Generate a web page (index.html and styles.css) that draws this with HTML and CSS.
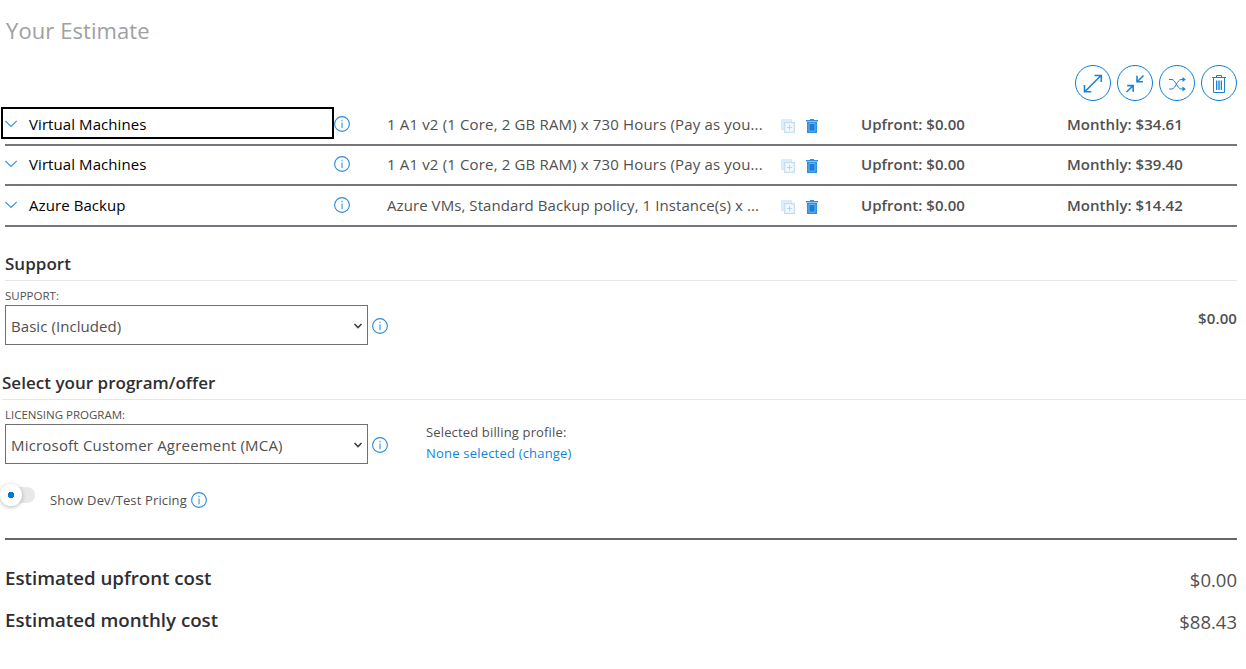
FILE: index.html
```html
<!DOCTYPE html>
<html lang="en">
<head>
<meta charset="utf-8">
<title>Your Estimate</title>
<link rel="stylesheet" href="styles.css">
</head>
<body>
<svg class="sprite" aria-hidden="true">
  <symbol id="info" viewBox="0 0 16 16"><circle cx="8" cy="8" r="7.4" fill="none" stroke="#2b8bd8" stroke-width="1.1"/><path d="M7.300 3.800h1.500v1.500H7.300zM7.300 6.500h1.500v5.700H7.300z" fill="#6cafe4"/></symbol>
  <symbol id="chevron" viewBox="0 0 12 8"><path d="M.3 1 6 6.500 11.700 1" fill="none" stroke="#3697e2" stroke-width="1.2"/></symbol>
  <symbol id="copy" viewBox="0 0 14 14"><path d="M.7.7h9.800v2.600H3.300v7.200H.7z" fill="#deedfa" stroke="#d3e7f8"/><path d="M3.700 3.700h9.600v9.600H3.700z" fill="#f4f9fe" stroke="#c4dff5" stroke-width="1.300"/><path d="M8.500 5.800v5.400M5.800 8.500h5.400" fill="none" stroke="#b5d7f3" stroke-width="1.2"/></symbol>
  <symbol id="bin" viewBox="0 0 12 14"><path d="M0 .9h4V0h4v.9h4v1.700H0zM1 3h10v11H1z" fill="#2f8fde"/><path d="M3 4.500h6v7.700H3z" fill="#1680d8" stroke="#8fc4ef" stroke-width=".7"/></symbol>
  <symbol id="caret" viewBox="0 0 10 6"><path d="M1.500 1 5 4.500 8.500 1" fill="none" stroke="#3f3f3f" stroke-width="1.6"/></symbol>
</svg>
<main class="estimate">
  <h1 class="title">Your Estimate</h1>
  <div class="toolbar">
    <button class="round" aria-label="Expand all"><svg viewBox="0 0 36 36"><path d="M10 26.500 26 10.500M19.500 10.500h6.800v6.500M9.500 20v6.800h6.800"/></svg></button>
    <button class="round" aria-label="Collapse all"><svg viewBox="0 0 36 36"><path d="m26.500 10.500-6.300 6.200M20 10.700v6.100h6M9.500 27l6.500-6.300M10.200 20.600h6v6.100"/></svg></button>
    <button class="round" aria-label="Reorder"><svg viewBox="0 0 36 36"><path class="thin" d="M10 14.500h3c3.200 0 5.500 9.500 9 9.500h2M10 24h3c3.200 0 5.500-9.500 9-9.500h2"/><path class="solid" d="m23.500 12 3.300 2.500-3.300 2.500zM23.500 21.500l3.300 2.500-3.300 2.500z"/></svg></button>
    <button class="round" aria-label="Delete all"><svg viewBox="0 0 36 36"><path class="thin" d="M11 12.500h14M15.500 12v-1.500h5V12M12.500 13v14.500h11V13M15.500 15.500V25M17.200 15.500V25M18.800 15.500V25M20.500 15.500V25"/></svg></button>
  </div>

  <section class="items">
    <div class="item first">
      <button class="name focused"><svg class="chev"><use href="#chevron"/></svg>Virtual Machines</button>
      <svg class="info"><use href="#info"/></svg>
      <span class="desc">1 A1 v2 (1 Core, 2 GB RAM) x 730 Hours (Pay as you...</span>
      <svg class="copy"><use href="#copy"/></svg>
      <svg class="bin"><use href="#bin"/></svg>
      <b class="cost">Upfront: $0.00</b>
      <b class="cost">Monthly: $34.61</b>
    </div>
    <div class="item second">
      <button class="name"><svg class="chev"><use href="#chevron"/></svg>Virtual Machines</button>
      <svg class="info"><use href="#info"/></svg>
      <span class="desc">1 A1 v2 (1 Core, 2 GB RAM) x 730 Hours (Pay as you...</span>
      <svg class="copy"><use href="#copy"/></svg>
      <svg class="bin"><use href="#bin"/></svg>
      <b class="cost">Upfront: $0.00</b>
      <b class="cost">Monthly: $39.40</b>
    </div>
    <div class="item third">
      <button class="name"><svg class="chev"><use href="#chevron"/></svg>Azure Backup</button>
      <svg class="info"><use href="#info"/></svg>
      <span class="desc backup">Azure VMs, Standard Backup policy, 1 Instance(s) x ...</span>
      <svg class="copy"><use href="#copy"/></svg>
      <svg class="bin"><use href="#bin"/></svg>
      <b class="cost">Upfront: $0.00</b>
      <b class="cost">Monthly: $14.42</b>
    </div>
  </section>

  <section class="support">
    <h2 class="heading">Support</h2>
    <div class="field-row">
      <div class="field">
        <span class="label">SUPPORT:</span>
        <div class="select-line"><div class="select"><span>Basic (Included)</span><svg class="caret"><use href="#caret"/></svg></div><svg class="info"><use href="#info"/></svg></div>
      </div>
      <b class="support-cost">$0.00</b>
    </div>
  </section>

  <section class="program">
    <h2 class="heading">Select your program/offer</h2>
    <div class="field-row">
      <div class="field">
        <span class="label">LICENSING PROGRAM:</span>
        <div class="select-line"><div class="select"><span class="wide">Microsoft Customer Agreement (MCA)</span><svg class="caret"><use href="#caret"/></svg></div><svg class="info"><use href="#info"/></svg></div>
      </div>
      <div class="billing"><span>Selected billing profile:</span><a>None selected (change)</a></div>
    </div>
  </section>

  <div class="dev">
    <span class="switch"><span class="knob"></span></span>
    <span class="dev-label">Show Dev/Test Pricing</span>
    <svg class="info"><use href="#info"/></svg>
  </div>

  <section class="totals">
    <div class="total"><b>Estimated upfront cost</b><span>$0.00</span></div>
    <div class="total"><b>Estimated monthly cost</b><span>$88.43</span></div>
  </section>
</main>
</body>
</html>
```

FILE: styles.css
```css
* { box-sizing: border-box; }
body { margin: 0; background: #fff; color: #505050; font: 15px/24px "Open Sans", "Noto Sans", sans-serif; }
.sprite { position: absolute; width: 0; height: 0; }
.estimate { width: 1246px; height: 669px; overflow: hidden; }
svg { display: block; flex: none; }
h1, h2 { margin: 0; }
button { background: none; border: 0; padding: 0; font: inherit; }
b { font-weight: 600; }
.title { height: 65px; padding: 14px 0 0 6px; font-size: 22px; line-height: 32px; font-weight: 400; letter-spacing: .08px; color: #a0a0a0; }
.toolbar { display: flex; justify-content: flex-end; gap: 6px; height: 36px; padding-right: 9px; }
.round { width: 36px; height: 36px; border: 1px solid #0f7dd5; border-radius: 50%; }
.round svg { width: 36px; height: 36px; margin: -1px; fill: none; stroke: #1b83d6; stroke-width: 1.6; }
.round .thin { stroke-width: 1; }
.round .solid { fill: #1b83d6; stroke: none; }
.items { padding: 0 9px 0 5px; }
.item { display: grid; grid-template-columns: 329px 53px 394px 25px 55px 206px 1fr; align-items: start; border-bottom: 2px solid #77757c; }
.first { height: 45px; padding-top: 11px; }
.second { height: 40px; padding-top: 6px; }
.third { height: 41px; padding-top: 7px; }
.name { display: flex; gap: 12px; height: 24px; margin: -1px 4px 0 0; padding-top: 1px; color: #000; text-align: left; letter-spacing: .08px; }
.focused { outline: 2px solid #000; outline-offset: 2px; }
.chev { width: 12px; height: 8px; margin-top: 8px; }
.info { width: 16px; height: 16px; }
.item .info { margin-top: 4px; }
.desc { letter-spacing: .155px; white-space: nowrap; }
.backup { letter-spacing: .075px; }
.cost { letter-spacing: .04px; }
.copy { width: 14px; height: 14px; margin-top: 7px; }
.bin { width: 12px; height: 14px; margin-top: 7px; }
.heading { height: 29px; font-weight: 600; font-size: 17px; line-height: 24px; letter-spacing: .02px; color: #2f2f33; border-bottom: 1px solid #e6e6e6; }
.support { padding: 25px 9px 0 5px; height: 144px; }
.field-row { display: flex; }
.label { display: block; height: 24px; padding-top: 6px; font-size: 11.5px; line-height: 17px; }
.select-line { display: flex; align-items: center; gap: 4px; }
.select-line .info { margin-top: 2px; }
.select { display: flex; align-items: center; justify-content: space-between; width: 363px; height: 40px; padding: 2px 4px 0 5px; border: 1px solid #707070; letter-spacing: .06px; }
.select .wide { letter-spacing: .19px; }
.caret { width: 10px; height: 6px; }
.support-cost { margin-left: auto; padding-top: 25px; letter-spacing: .1px; }
.program { padding-left: 2px; height: 111px; }
.program .field { margin-left: 3px; }
.billing { display: flex; flex-direction: column; margin-left: 38px; padding-top: 22px; font-size: 13px; line-height: 21px; letter-spacing: .15px; }
.billing a { color: #1283da; letter-spacing: .2px; }
.dev { display: flex; height: 56px; padding-top: 6px; font-size: 13px; }
.switch { width: 33px; height: 16px; margin: -1px 0 0 2px; background: #e7e8ea; border-radius: 8px; }
.knob { display: block; width: 22px; height: 22px; margin: -3px 0 0 -2px; border-radius: 50%; background: radial-gradient(circle, #0078d4 0 3px, #fff 3.5px); box-shadow: 0 1px 4px rgba(0,0,0,.3); }
.dev-label { margin-left: 15px; letter-spacing: .14px; }
.dev .info { margin: 4px 0 0 4px; }
.totals { margin: 0 9px 0 5px; border-top: 2px solid #67676a; padding-top: 18px; }
.total { display: flex; justify-content: space-between; height: 42px; line-height: 42px; font-size: 18.5px; }
.total b { margin-top: -1px; font-size: 18.7px; color: #2f2f33; }
.total span { padding-top: 1px; }
```
